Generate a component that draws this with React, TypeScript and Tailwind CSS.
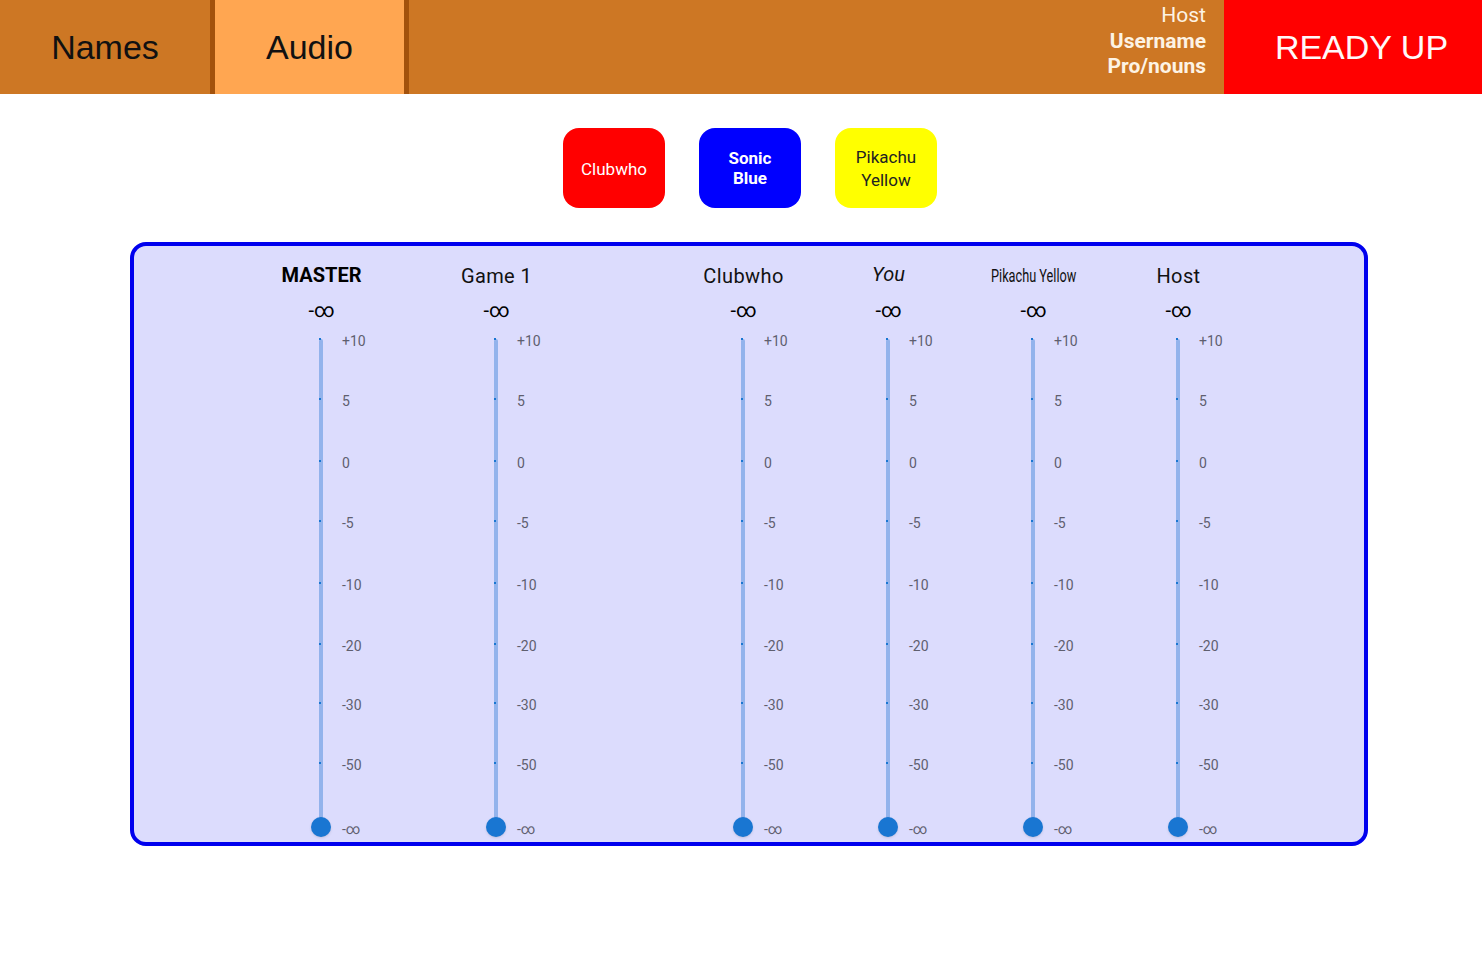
import React from "react";

const roboto = { fontFamily: "Roboto, 'Noto Sans', sans-serif" };
const arial = { fontFamily: "'Liberation Sans', Arial, sans-serif" };

// dB scale marks with their offsets along the rail
const marks: [string, number][] = [
  ["+10", 0],
  ["5", 60],
  ["0", 122],
  ["-5", 182],
  ["-10", 244],
  ["-20", 305],
  ["-30", 364],
  ["-50", 424],
  ["-∞", 488],
];

function VolumeSlider() {
  return (
    <div className="relative w-[145px] h-[488px]">
      {/* rail */}
      <div className="absolute left-[70px] top-0 bottom-0 w-[4px] rounded-full bg-[#93b3ec]" />
      {marks.map(([m, y]) => (
        <React.Fragment key={m}>
          <div className="absolute left-[70px] w-[2px] h-[2px] bg-[#1976d2]" style={{ top: y - 1 }} />
          <div
            className="absolute left-[93px] h-[20px] -translate-y-1/2 text-[14px] leading-[20px] text-[#5f5f6f] whitespace-nowrap"
            style={{ top: y + 2 }}
          >
            {m}
          </div>
        </React.Fragment>
      ))}
      {/* thumb */}
      <div className="absolute left-[62px] bottom-[-10px] w-[20px] h-[20px] rounded-full bg-[#1976d2] shadow-sm" />
    </div>
  );
}

type Col = { name: string; ml: string; cls: string };

const columns: Col[] = [
  { name: "MASTER", ml: "ml-[115px]", cls: "font-bold text-[20px] text-black" },
  { name: "Game 1", ml: "ml-[30px]", cls: "font-normal text-[20px] tracking-[0.02em] text-[#111] translate-y-[1px]" },
  { name: "Clubwho", ml: "ml-[102px]", cls: "font-normal text-[20px] tracking-[0.02em] text-[#111] translate-y-[1px]" },
  { name: "You", ml: "ml-0", cls: "italic text-[20px] text-[#111] -translate-y-[1px]" },
  { name: "Pikachu Yellow", ml: "ml-0", cls: "text-[19px] text-[#111] scale-x-[0.67] translate-y-[1px]" },
  { name: "Host", ml: "ml-0", cls: "font-normal text-[20px] tracking-[0.02em] text-[#111] translate-y-[1px]" },
];

export default function App() {
  return (
    <div className="w-[1482px] min-h-[976px] bg-white" style={roboto}>
      {/* top bar */}
      <div className="flex h-[94px] bg-[#cd7724]">
        <div className="w-[210px] flex items-center justify-center text-[34px] text-[#111]" style={arial}>
          Names
        </div>
        <div className="w-[5px] bg-[#a3520c]" />
        <div className="w-[189px] flex items-center justify-center bg-[#ffa651] text-[34px] text-[#111]" style={arial}>
          Audio
        </div>
        <div className="w-[5px] bg-[#a3520c]" />
        <div className="flex-1" />
        <div className="flex flex-col items-end pt-[3px] pr-[18px] text-[21px] leading-[25.5px] text-[#fdf3e4]">
          <div className="font-normal">Host</div>
          <div className="font-bold">Username</div>
          <div className="font-bold">Pro/nouns</div>
        </div>
        <div className="w-[258px] flex items-center justify-center pl-[17px] bg-[#ff0000] text-[34px] text-[#fff8f8]" style={arial}>
          READY UP
        </div>
      </div>

      {/* player chips */}
      <div className="flex mt-[34px] ml-[563px] gap-[34px]">
        <div className="w-[102px] h-[80px] pt-[2px] rounded-[16px] bg-[#ff0000] flex items-center justify-center text-center text-[17px] leading-[20px] text-white">
          Clubwho
        </div>
        <div className="w-[102px] h-[80px] rounded-[16px] bg-[#0000ff] flex items-center justify-center text-center text-[17px] leading-[20px] font-bold text-white">
          Sonic
          <br />
          Blue
        </div>
        <div className="w-[102px] h-[80px] pt-[2px] rounded-[16px] bg-[#ffff00] flex items-center justify-center text-center text-[17px] leading-[23px] text-[#222]">
          Pikachu
          <br />
          Yellow
        </div>
      </div>

      {/* mixer panel */}
      <div className="mt-[34px] ml-[130px] w-[1238px] border-[4px] border-[#0000ee] rounded-[16px] bg-[#dcdcfd] pt-[17px] pb-[5px] flex">
        {columns.map((c) => (
          <div key={c.name} className={`${c.ml} w-[145px] flex flex-col items-center`}>
            <div className="h-[24px] w-full flex items-center justify-center">
              <span className={`${c.cls} inline-block leading-[24px] whitespace-nowrap`}>{c.name}</span>
            </div>
            <div className="mt-[12px] h-[24px] leading-[24px] text-[20px] text-black -translate-y-[1px]">-∞</div>
            <div className="mt-[16px] mb-[10px]">
              <VolumeSlider />
            </div>
          </div>
        ))}
      </div>
    </div>
  );
}
